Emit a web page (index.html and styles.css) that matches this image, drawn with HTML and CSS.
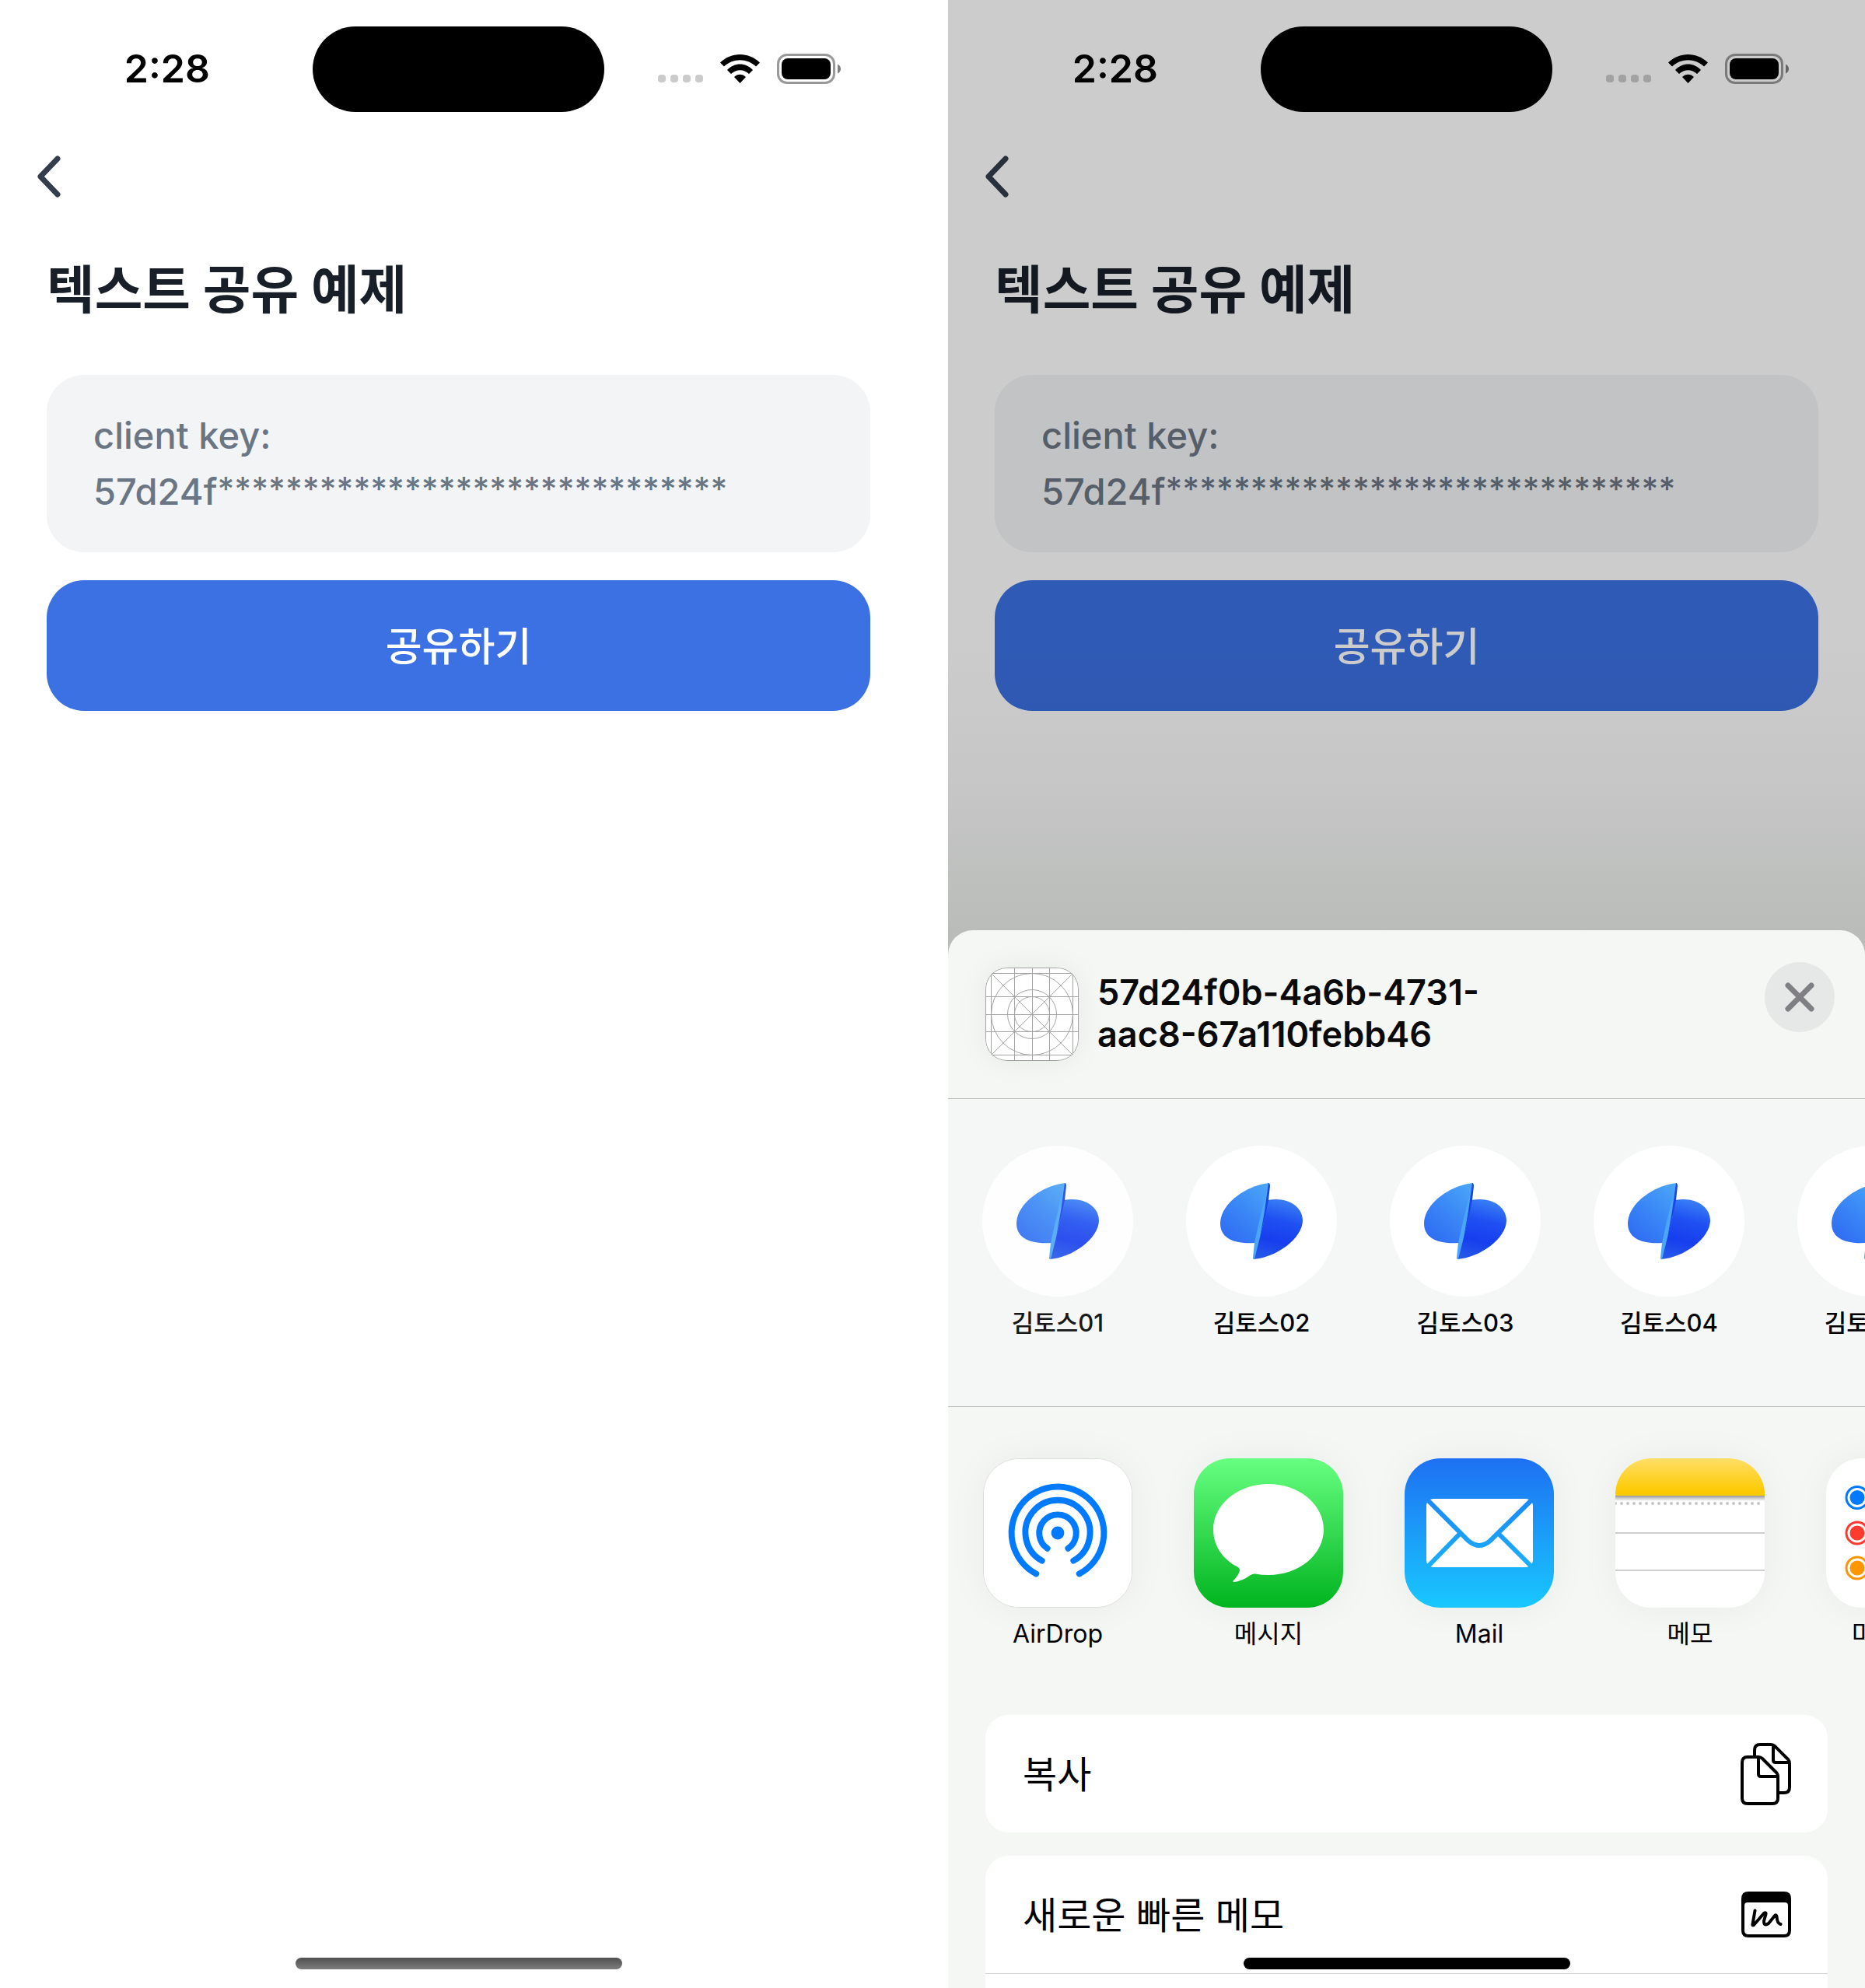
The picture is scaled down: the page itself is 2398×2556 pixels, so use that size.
FILE: index.html
```html
<!DOCTYPE html>
<html lang="ko">
<head>
<meta charset="utf-8">
<meta name="viewport" content="width=device-width, initial-scale=1">
<title>텍스트 공유 예제</title>
<link rel="stylesheet" href="styles.css">
</head>
<body>
<svg class="defs" aria-hidden="true">
  <defs>
    <linearGradient id="leaf-left" x1="0.2" y1="1" x2="0.9" y2="0"><stop offset="0" stop-color="#2f6cf3"/><stop offset="0.5" stop-color="#3a87f6"/><stop offset="1" stop-color="#4aa6f8"/></linearGradient>
    <linearGradient id="leaf-right" x1="0.6" y1="0" x2="0.4" y2="1"><stop offset="0" stop-color="#3a80f5"/><stop offset="0.35" stop-color="#1f50f2"/><stop offset="0.7" stop-color="#173eee"/><stop offset="1" stop-color="#2457e8"/></linearGradient>
    <linearGradient id="green" x1="0" y1="0" x2="0" y2="1"><stop offset="0" stop-color="#67ff81"/><stop offset="1" stop-color="#01b41f"/></linearGradient>
    <linearGradient id="mail" gradientUnits="userSpaceOnUse" x1="0" y1="0" x2="0" y2="192"><stop offset="0" stop-color="#1d70f2"/><stop offset="1" stop-color="#19c8fe"/></linearGradient>
    <linearGradient id="yellow" x1="0" y1="0" x2="0" y2="1"><stop offset="0" stop-color="#ffde66"/><stop offset="0.85" stop-color="#fdcb06"/><stop offset="1" stop-color="#fbc800"/></linearGradient>
    <linearGradient id="fold" x1="0" y1="0" x2="0" y2="1"><stop offset="0" stop-color="#999"/><stop offset="1" stop-color="#fff"/></linearGradient>
    <symbol id="wifi" viewBox="0 0 51 37"><path d="M0 10.5C14-3.5 37-3.5 51 10.5L46 15.5C34.500 4.500 16.500 4.500 5 15.500ZM9 20C18 10 33 10 42 20L37 25C30.500 18.500 20.500 18.500 14 25ZM18 29C22 24.500 29 24.500 33 29L25.500 37Z"/></symbol>
    <symbol id="battery" viewBox="0 0 82 39"><rect x="1.500" y="1.500" width="72" height="36" rx="11.500" fill="none" stroke="#000" stroke-opacity=".4" stroke-width="3"/><rect x="6" y="6" width="63" height="27" rx="8"/><path d="M78 13.500Q82 15.500 82 19.500Q82 23.500 78 25.500Z" fill-opacity=".5"/></symbol>
    <symbol id="chevron" viewBox="0 0 30 54"><path d="M26 4L4 27L26 50" fill="none" stroke="#333d4b" stroke-width="7" stroke-linecap="round" stroke-linejoin="round"/></symbol>
    <symbol id="logo" viewBox="0 0 194 194">
      <path d="M107 48C77 51 44 75 44 100C44 118 60 127 89 125L101 95Z" fill="url(#leaf-left)"/>
      <path d="M105 70C130 65 150 78 150 96C150 119 116 144 87 146L100 95Z" fill="url(#leaf-right)"/>
      <path d="M106 48L104 74L101 94L88 146Q86 147 86 144L88 125L93 102Z" fill="#4aa6f8"/>
      <path d="M106 48Q108 48 108 52L106 70L101 94L95 118L101 84Z" fill="#1a45e6"/>
    </symbol>
  </defs>
</svg>

<main class="screens">
  <section class="phone" aria-label="텍스트 공유 화면">
    <header class="status">
      <time class="clock">2:28</time>
      <span class="island"></span>
      <div class="signals">
        <span class="dots"><i></i><i></i><i></i><i></i></span>
        <svg class="wifi"><use href="#wifi"/></svg>
        <svg class="battery"><use href="#battery"/></svg>
      </div>
    </header>
    <nav class="nav"><button class="back" type="button" aria-label="뒤로"><svg class="chevron"><use href="#chevron"/></svg></button></nav>
    <div class="content">
      <h1 class="title">텍스트 공유 예제</h1>
      <p class="key">client key:<br>57d24f<span class="mask">******************************</span></p>
      <button class="share" type="button">공유하기</button>
    </div>
    <span class="home home-soft"></span>
  </section>

  <section class="phone" aria-label="공유 시트 화면">
    <header class="status">
      <time class="clock">2:28</time>
      <span class="island"></span>
      <div class="signals">
        <span class="dots"><i></i><i></i><i></i><i></i></span>
        <svg class="wifi"><use href="#wifi"/></svg>
        <svg class="battery"><use href="#battery"/></svg>
      </div>
    </header>
    <nav class="nav"><button class="back" type="button" aria-label="뒤로"><svg class="chevron"><use href="#chevron"/></svg></button></nav>
    <div class="content">
      <h1 class="title">텍스트 공유 예제</h1>
      <p class="key">client key:<br>57d24f<span class="mask">******************************</span></p>
      <button class="share" type="button">공유하기</button>
    </div>
    <div class="dim"></div>

    <div class="sheet" role="dialog" aria-label="공유">
      <header class="sheet-head">
        <svg class="template" viewBox="0 0 120 120">
          <rect x=".5" y=".5" width="119" height="119" rx="27" fill="#fff"/>
          <path d="M7.500 7V113M37.500 0V120M60.500 0V120M82.500 0V120M112.500 7V113M7 7.500H113M0 37.500H120M0 60.500H120M0 82.500H120M7 112.500H113M7.500 7.500L112.500 112.500M112.500 7.500L7.500 112.500"/>
          <circle cx="60" cy="60" r="52.500"/><circle cx="60" cy="60" r="31.500"/><circle cx="60" cy="60" r="22.500"/>
        </svg>
        <h2 class="sheet-title">57d24f0b-4a6b-4731-<br>aac8-67a110febb46</h2>
        <button class="close" type="button" aria-label="닫기"><svg class="cross" viewBox="0 0 40 40"><path d="M5 5L35 35M35 5L5 35"/></svg></button>
      </header>

      <ul class="row contacts">
        <li><button class="item item-pressed" type="button"><svg class="avatar"><use href="#logo"/></svg>김토스01</button></li>
        <li><button class="item" type="button"><svg class="avatar"><use href="#logo"/></svg>김토스02</button></li>
        <li><button class="item" type="button"><svg class="avatar"><use href="#logo"/></svg>김토스03</button></li>
        <li><button class="item" type="button"><svg class="avatar"><use href="#logo"/></svg>김토스04</button></li>
        <li><button class="item" type="button"><svg class="avatar"><use href="#logo"/></svg>김토스05</button></li>
      </ul>

      <ul class="row apps">
        <li><button class="item" type="button">
          <svg class="app app-outlined" viewBox="0 0 192 192"><rect width="192" height="192" fill="#fff"/><g fill="none" stroke="#007aff" stroke-width="8" stroke-linecap="round"><path d="M68 149A60 60 0 1 1 124 149"/><path d="M75.500 132A42 42 0 1 1 116.500 132"/><path d="M82.500 116A24 24 0 1 1 109.500 116"/></g><circle cx="96" cy="96" r="8.500" fill="#007aff"/></svg>AirDrop</button></li>
        <li><button class="item" type="button">
          <svg class="app" viewBox="0 0 192 192"><rect width="192" height="192" fill="url(#green)"/><path d="M96 33C135 33 167 59 167 91.500C167 124 135 150 96 150Q87 150 79 148.500Q76 148 73 150Q62 158 52 159Q49 159 51 157Q58 150 59 144Q59 141 57 140C37 130 25 112 25 91.500C25 59 57 33 96 33Z" fill="#fff"/></svg>메시지</button></li>
        <li><button class="item" type="button">
          <svg class="app" viewBox="0 0 192 192"><rect width="192" height="192" fill="url(#mail)"/><rect x="28" y="52" width="137" height="88" rx="9" fill="#fff"/><path d="M27 51L82 106Q96 118 110 106L166 51M27 142L70 98M166 142L122 98" fill="none" stroke="url(#mail)" stroke-width="6"/></svg>Mail</button></li>
        <li><button class="item" type="button">
          <svg class="app" viewBox="0 0 192 192"><rect width="192" height="192" fill="#fff"/><rect width="192" height="48" fill="url(#yellow)"/><rect y="48" width="192" height="7" fill="url(#fold)"/><path d="M0 58H192" stroke="#c6c6c8" stroke-width="4" stroke-linecap="round" stroke-dasharray="0 8"/><path d="M0 96H192M0 144H192" stroke="#cfcfcf" stroke-width="2"/></svg>메모</button></li>
        <li><button class="item" type="button">
          <svg class="app" viewBox="0 0 192 192"><rect width="192" height="192" fill="#fff"/><g fill="none" stroke-width="3"><circle cx="40" cy="50.500" r="14" stroke="#007aff"/><circle cx="40" cy="96" r="14" stroke="#ff3b30"/><circle cx="40" cy="141" r="14" stroke="#ff9500"/></g><circle cx="40" cy="50.500" r="9.500" fill="#007aff"/><circle cx="40" cy="96" r="9.500" fill="#ff3b30"/><circle cx="40" cy="141" r="9.500" fill="#ff9500"/></svg>미리 알림</button></li>
      </ul>

      <div class="actions">
        <div class="group">
          <button class="action" type="button"><span class="action-name">복사</span>
            <svg class="copy" viewBox="0 0 65 80"><path d="M18 17V9Q18 2 25 2H39Q42 2 44 4L61 21Q63 23 63 27V57Q63 64 56 64H49M42 3V22Q42 25 45 25H62M24 18H9Q2 18 2 25V71Q2 78 9 78H41Q48 78 48 71V43Q48 40 46 38L28 20Q26 18 23 18V40Q23 43 26 43H47"/></svg>
          </button>
        </div>
        <div class="group">
          <button class="action" type="button"><span class="action-name">새로운 빠른 메모</span>
            <svg class="memo" viewBox="0 0 64 59"><path d="M9 0H55Q64 0 64 9V50Q64 59 55 59H9Q0 59 0 50V9Q0 0 9 0ZM8 14Q4 14 4 18V50Q4 55 9 55H55Q60 55 60 50V18Q60 14 56 14Z" fill-rule="evenodd"/><path d="M17.500 24.500L14.500 42Q14 44 16 43L29 28Q32 26 31.500 29L29 38Q29 45 35 41L43 31Q45 29 45.500 32Q46 41 50.500 42" fill="none" stroke="#000" stroke-width="4" stroke-linecap="round" stroke-linejoin="round"/></svg>
          </button>
          <div class="action action-next"></div>
        </div>
      </div>
    </div>
    <span class="home"></span>
  </section>
</main>
</body>
</html>
```
FILE: styles.css
```css
* { box-sizing: border-box; }

body {
  margin: 0;
  background: #fff;
  color: #000;
  font-family: Inter, "Noto Sans CJK KR", sans-serif;
}

button {
  margin: 0;
  padding: 0;
  border: 0;
  background: none;
  color: inherit;
  font: inherit;
  cursor: pointer;
}

h1, h2, p, ul { margin: 0; padding: 0; }
ul { list-style: none; }
svg { display: block; }
.defs { position: absolute; width: 0; height: 0; }

.screens {
  display: grid;
  grid-template-columns: 1fr 1fr;
  gap: 40px;
}

.phone {
  position: relative;
  height: 100vh;
  min-width: 0;
  overflow: hidden;
}

/* Status bar */
.status {
  display: grid;
  grid-template-columns: 1fr 375px 1fr;
  align-items: center;
  padding-top: 34px;
}
.clock {
  justify-self: end;
  padding: 0 132px 2px 0;
  font-size: 50px;
  font-weight: 600;
  line-height: 60px;
}
.island { height: 110px; border-radius: 55px; background: #000; }
.signals {
  display: flex;
  align-items: center;
  gap: 22px;
  padding: 0 0 2px 69px;
}
.dots { display: flex; gap: 6px; padding-top: 26px; }
.dots i { width: 10px; height: 10px; border-radius: 4px; background: #cbcbcb; }
.wifi { width: 51px; height: 37px; }
.battery { width: 82px; height: 39px; }

/* Page */
.nav { padding: 44px 36px 62px; }
.back { display: block; padding: 12px; }
.chevron { width: 30px; height: 54px; }
.content { padding: 0 60px; }
.title {
  color: #191f28;
  font-size: 67px;
  font-weight: 700;
  line-height: 90px;
}
.key {
  margin-top: 64px;
  padding: 42px 60px;
  border-radius: 48px;
  background: #f2f4f6;
  color: #6b7684;
  font-size: 47px;
  font-weight: 500;
  line-height: 72px;
}
.mask { font-size: 42px; line-height: normal; vertical-align: text-top; }
.share {
  display: block;
  width: 100%;
  height: 168px;
  margin-top: 36px;
  padding-bottom: 4px;
  border-radius: 48px;
  background: #3b71e3;
  color: #fff;
  font-size: 51px;
  font-weight: 500;
}
.home {
  position: absolute;
  bottom: 24px;
  left: 50%;
  width: 420px;
  height: 15px;
  border-radius: 8px;
  background: #000;
  transform: translateX(-50%);
}
.home-soft { background: linear-gradient(#505050, #7d7d7d); }

/* Share sheet */
.dim {
  position: absolute;
  inset: 0;
  background: linear-gradient(rgba(5, 30, 8, 0) 820px, rgba(5, 30, 8, 0.03) 1000px, rgba(5, 30, 8, 0.09) 1196px), rgba(0, 0, 0, 0.2);
}
.sheet {
  position: absolute;
  inset: 1196px 0 0;
  overflow: hidden;
  border-radius: 32px 32px 0 0;
  background: #f5f7f4;
}
.sheet-head {
  display: flex;
  align-items: flex-start;
  gap: 24px;
  padding: 48px 39px 48px 48px;
  border-bottom: 1px solid #bcbebc;
}
.template {
  width: 120px;
  height: 120px;
  border-radius: 27px;
  box-shadow: 0 0 40px rgba(0, 0, 0, 0.06);
  fill: none;
  stroke: #a4a4a4;
  stroke-width: 1;
}
.sheet-title {
  flex: 1;
  padding-top: 5px;
  color: #0a0a0a;
  font-size: 45px;
  font-weight: 600;
  line-height: 54px;
}
.close {
  display: grid;
  place-items: center;
  width: 90px;
  height: 90px;
  margin-top: -7px;
  border-radius: 50%;
  background: #e6e8e7;
}
.cross { width: 40px; height: 40px; fill: none; stroke: #808084; stroke-width: 7; stroke-linecap: round; }

.row { display: flex; overflow: hidden; }
.item {
  display: flex;
  flex-direction: column;
  align-items: center;
  gap: 12px;
  line-height: 44px;
  white-space: nowrap;
}
.item-pressed { opacity: 0.9; }
.contacts {
  gap: 68px;
  padding: 60px 44px 85px;
  border-bottom: 1px solid #bcbebc;
  background: #f5f7f6;
  font-size: 31px;
  font-weight: 500;
}
.avatar { width: 194px; height: 194px; border-radius: 50%; background: #fff; }
.apps { gap: 79px; padding: 66px 45px 82px; font-size: 32px; }
.app { width: 192px; height: 192px; border-radius: 46px; box-shadow: 0 0 50px rgba(0, 0, 0, 0.05); }
.app-outlined { border: 1px solid #dcdcdc; }

.actions { display: grid; gap: 30px; padding: 0 48px; }
.group { overflow: hidden; border-radius: 30px; background: #fff; }
.action {
  display: flex;
  align-items: center;
  justify-content: space-between;
  width: 100%;
  height: 151px;
  padding: 0 47px 0 48px;
  font-size: 48px;
}
.action-name { padding-bottom: 6px; }
.action-next { border-top: 1px solid #d1d1d3; }
.copy { width: 65px; height: 80px; fill: none; stroke: #000; stroke-width: 4; stroke-linejoin: round; }
.memo { width: 64px; height: 59px; }
```
